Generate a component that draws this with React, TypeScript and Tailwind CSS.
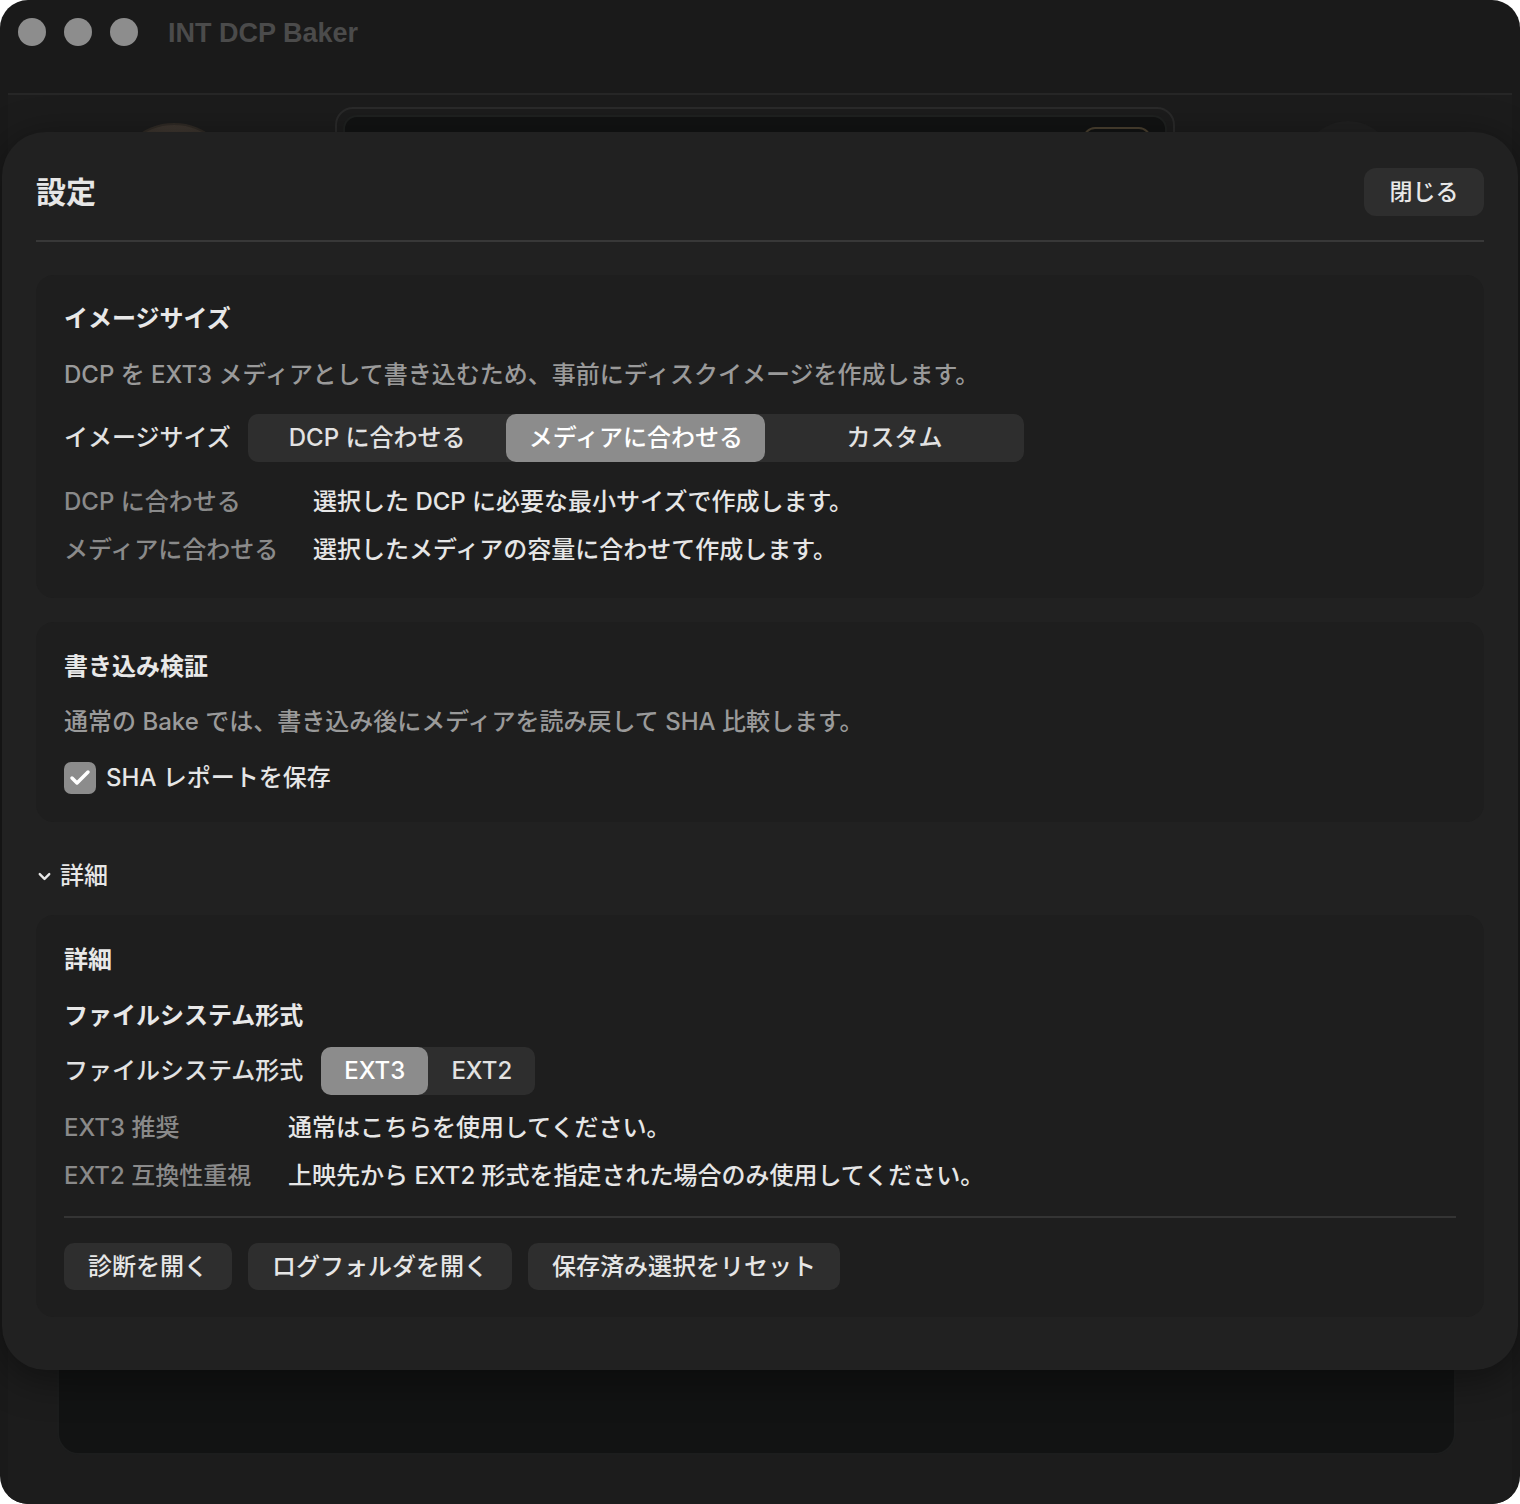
import React, { useState } from 'react';
import { Check, ChevronDown } from 'lucide-react';

const FONT = 'font-["Inter","Noto_Sans_CJK_JP",sans-serif]';

type SegmentedProps = {
    options: string[];
    value: string;
    onChange: (v: string) => void;
    className: string;
};

const Segmented: React.FC<SegmentedProps> = ({ options, value, onChange, className }) => (
    <div className={`grid rounded-[10px] bg-[#2e2e2e] h-12 ${className}`}>
        {options.map((opt) => (
            <button
                key={opt}
                onClick={() => onChange(opt)}
                className={`rounded-[10px] text-[24px] leading-8 font-medium flex items-center justify-center ${
                    value === opt ? 'bg-[#8c8c8c] text-white' : 'text-[#e2e2e2]'
                }`}
            >
                {opt}
            </button>
        ))}
    </div>
);

const Card: React.FC<{ children: React.ReactNode; className?: string }> = ({ children, className = '' }) => (
    <div className={`rounded-[18px] bg-[#1e1e1e] px-7 ${className}`}>{children}</div>
);

const App: React.FC = () => {
    const [imageSize, setImageSize] = useState('メディアに合わせる');
    const [fsType, setFsType] = useState('EXT3');
    const [saveReport, setSaveReport] = useState(true);
    const [detailsOpen, setDetailsOpen] = useState(true);

    return (
        <div className={`min-h-screen bg-white ${FONT}`}>
            <div className="relative h-[1504px] w-[1520px] rounded-[28px] bg-[#1a1a1a] overflow-hidden flex flex-col">
                {/* title bar */}
                <div className="h-[93px] shrink-0 flex items-start">
                    <div className="flex items-center gap-[18px] pl-[18px] pt-[18px]">
                        <span className="w-7 h-7 rounded-full bg-[#8d8d8d]" />
                        <span className="w-7 h-7 rounded-full bg-[#8d8d8d]" />
                        <span className="w-7 h-7 rounded-full bg-[#8d8d8d]" />
                    </div>
                    <div className='ml-[30px] mt-[15px] font-["Liberation_Sans",sans-serif] font-bold text-[27px] leading-9 text-[#4b4b4b]'>
                        INT DCP Baker
                    </div>
                </div>

                {/* main window content, dimmed behind the sheet */}
                <div className="flex-1 mx-[8px] border-t-2 border-[#262626] bg-[#1c1c1c] flex flex-col">
                    <div className="flex items-start pl-[106px]">
                        <div className="mt-[28px] w-[120px] h-[120px] rounded-full bg-[radial-gradient(circle_at_50%_30%,#463d35,#2a2622)] border-2 border-[#2f2a25]" />
                        <div className="ml-[101px] mt-[12px] w-[840px] h-[200px] rounded-[18px] border-2 border-[#2a2a2a] p-[6px]">
                            <div className="h-full rounded-[14px] border-2 border-[#1f2120] bg-[#121313] flex justify-end pr-[14px] pt-[10px]">
                                <div className="h-9 px-4 rounded-[12px] border-2 border-[#4a4030] text-[#5a5040] text-[18px] leading-8">
                                    Edit
                                </div>
                            </div>
                        </div>
                        <div className="ml-[127px] mt-[26px] w-[92px] h-[92px] rounded-full bg-[#202020]" />
                    </div>
                    <div className="flex-1 ml-[49px] mr-[56px] mt-[24px] mb-[49px] rounded-[22px] border-2 border-[#1c1d1d] bg-[#121313]" />
                </div>

                {/* settings sheet */}
                <div className="absolute top-[132px] left-[2px] right-[2px] h-[1238px] rounded-[44px] bg-[#212121] shadow-[0_8px_40px_rgba(0,0,0,0.45)] px-[34px] pt-9">
                    <div className="flex items-center justify-between h-12">
                        <h1 className="text-[30px] leading-10 font-bold text-[#e6e6e6]">設定</h1>
                        <button className="h-12 w-[120px] rounded-[12px] bg-[#2e2e2e] text-[23px] font-medium text-[#e8e8e8]">
                            閉じる
                        </button>
                    </div>
                    <div className="mt-[24px] h-[2px] bg-[#383838]" />

                    {/* image size */}
                    <Card className="mt-[33px] pt-7 pb-8">
                        <h2 className="text-[24px] leading-8 font-bold text-[#e8e8e8]">イメージサイズ</h2>
                        <p className="mt-6 text-[24px] leading-8 font-medium text-[#9a9a9a]">
                            DCP を EXT3 メディアとして書き込むため、事前にディスクイメージを作成します。
                        </p>
                        <div className="mt-[23px] flex items-center gap-[17px]">
                            <span className="text-[24px] leading-8 font-medium text-[#e2e2e2]">イメージサイズ</span>
                            <Segmented
                                options={['DCP に合わせる', 'メディアに合わせる', 'カスタム']}
                                value={imageSize}
                                onChange={setImageSize}
                                className="grid-cols-3 w-[776px]"
                            />
                        </div>
                        <div className="mt-6 grid grid-cols-[249px_1fr] gap-y-4 text-[24px] leading-8 font-medium">
                            <span className="text-[#8a8a8a]">DCP に合わせる</span>
                            <span className="text-[#e6e6e6]">選択した DCP に必要な最小サイズで作成します。</span>
                            <span className="text-[#8a8a8a]">メディアに合わせる</span>
                            <span className="text-[#e6e6e6]">選択したメディアの容量に合わせて作成します。</span>
                        </div>
                    </Card>

                    {/* write verification */}
                    <Card className="mt-6 pt-[29px] pb-7">
                        <h2 className="text-[24px] leading-8 font-bold text-[#e8e8e8]">書き込み検証</h2>
                        <p className="mt-[23px] text-[24px] leading-8 font-medium text-[#9a9a9a]">
                            通常の Bake では、書き込み後にメディアを読み戻して SHA 比較します。
                        </p>
                        <label className="mt-6 flex items-center gap-[10px] cursor-pointer">
                            <button
                                onClick={() => setSaveReport(!saveReport)}
                                className={`w-8 h-8 rounded-[7px] flex items-center justify-center ${
                                    saveReport ? 'bg-[#8c8c8c]' : 'bg-[#2e2e2e]'
                                }`}
                            >
                                {saveReport && <Check size={24} strokeWidth={3.5} className="text-white" />}
                            </button>
                            <span className="text-[24px] leading-8 font-medium text-[#e6e6e6]">SHA レポートを保存</span>
                        </label>
                    </Card>

                    <button
                        onClick={() => setDetailsOpen(!detailsOpen)}
                        className="mt-[38px] h-8 flex items-center gap-[6px] -ml-[1px]"
                    >
                        <ChevronDown size={19} strokeWidth={3} className="text-[#e6e6e6]" />
                        <span className="text-[24px] leading-8 font-medium text-[#e6e6e6]">詳細</span>
                    </button>

                    {detailsOpen && (
                        <Card className="mt-[23px] pt-[29px] pb-[27px]">
                            <h2 className="text-[24px] leading-8 font-bold text-[#e8e8e8]">詳細</h2>
                            <h3 className="mt-6 text-[24px] leading-8 font-bold text-[#e8e8e8]">ファイルシステム形式</h3>
                            <div className="mt-[15px] flex items-center gap-[18px]">
                                <span className="text-[24px] leading-8 font-medium text-[#e2e2e2]">ファイルシステム形式</span>
                                <Segmented
                                    options={['EXT3', 'EXT2']}
                                    value={fsType}
                                    onChange={setFsType}
                                    className="grid-cols-2 w-[214px]"
                                />
                            </div>
                            <div className="mt-[17px] grid grid-cols-[224px_1fr] gap-y-4 text-[24px] leading-8 font-medium">
                                <span className="text-[#8a8a8a]">EXT3 推奨</span>
                                <span className="text-[#e6e6e6]">通常はこちらを使用してください。</span>
                                <span className="text-[#8a8a8a]">EXT2 互換性重視</span>
                                <span className="text-[#e6e6e6]">上映先から EXT2 形式を指定された場合のみ使用してください。</span>
                            </div>
                            <div className="mt-6 h-[2px] bg-[#343434]" />
                            <div className="mt-[25px] flex gap-4">
                                {['診断を開く', 'ログフォルダを開く', '保存済み選択をリセット'].map((label) => (
                                    <button
                                        key={label}
                                        className="h-[47px] px-6 rounded-[10px] bg-[#2e2e2e] text-[24px] font-medium text-[#e6e6e6]"
                                    >
                                        {label}
                                    </button>
                                ))}
                            </div>
                        </Card>
                    )}
                </div>
            </div>
        </div>
    );
};

export default App;
